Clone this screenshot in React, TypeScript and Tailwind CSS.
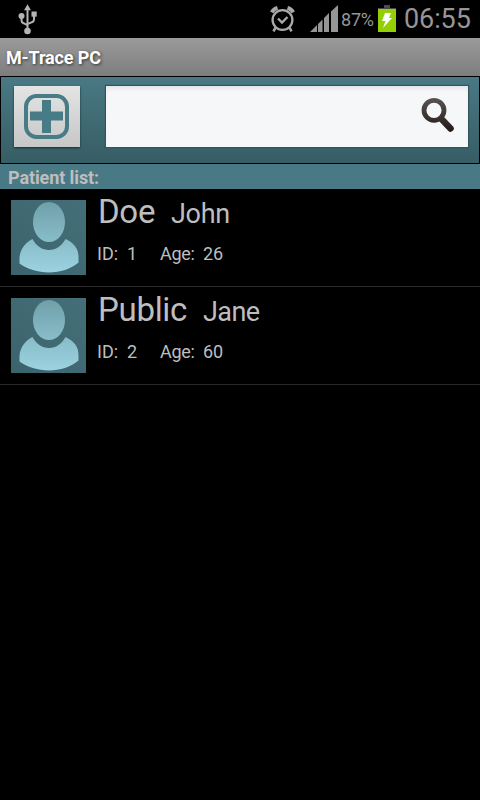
import React from "react";

type Patient = {
  last: string;
  first: string;
  id: number;
  age: number;
  lastStyle: string;
  firstStyle: string;
};

const patients: Patient[] = [
  { last: "Doe", first: "John", id: 1, age: 26, lastStyle: "w-[71px] tracking-[-0.3px]", firstStyle: "tracking-[-0.3px]" },
  { last: "Public", first: "Jane", id: 2, age: 60, lastStyle: "w-[103px] tracking-[-0.3px]", firstStyle: "tracking-[-0.6px]" },
];

function UsbIcon() {
  return (
    <svg width="20" height="31" viewBox="0 0 20 31" fill="none" stroke="#b4b4b4" strokeWidth="2">
      <path d="M9.500 5v21M3.500 12v4.500q0 2 2 2.700l4 2M16 10v5.500q0 2-2 2.700l-4.500 2" />
      <path d="M9.500 .3l3.500 6h-7z" fill="#b4b4b4" stroke="none" />
      <circle cx="3.500" cy="12" r="3" fill="#b4b4b4" stroke="none" />
      <rect x="13.500" y="7.500" width="5.200" height="5.200" fill="#b4b4b4" stroke="none" />
      <circle cx="9.500" cy="27" r="3.300" fill="#b4b4b4" stroke="none" />
    </svg>
  );
}

function AlarmIcon() {
  return (
    <svg width="26" height="28" viewBox="0 0 26 28" fill="none" stroke="#a9a9a9">
      <circle cx="12.500" cy="15" r="9.900" strokeWidth="2.300" />
      <path d="M8 13.500l4 4 5.500-5.500" strokeWidth="2.400" />
      <path d="M1.800 7.300C3 5 5 3.500 7.500 2.800M23.200 7.300C22 5 20 3.500 17.500 2.800" strokeWidth="3.800" />
      <path d="M5.500 22.500l-2 3.800M19.500 22.500l2 3.800" strokeWidth="2.600" />
    </svg>
  );
}

function SignalIcon() {
  return (
    <svg width="28" height="27" viewBox="0 0 28 27" fill="#969696">
      <path d="M0 27l7-7v7zM8 19l4.500-4.500V27H8zM14 13l5-5v19h-5zM21 6.500L28 0v27h-7z" />
    </svg>
  );
}

function BatteryIcon() {
  return (
    <svg width="18" height="27" viewBox="0 0 18 27">
      <path d="M6 0h6v3h6v4H0V3h6z" fill="#4a4a4a" />
      <rect y="4" width="18" height="23" fill="#93cf05" />
      <path d="M7 8h6l-2 5h3L5 23l2.500-7H4z" fill="#fff" />
    </svg>
  );
}

function StatusBar() {
  return (
    <header className="flex h-[38px] items-start bg-black text-[#969696]">
      <div className="ml-[18px] mt-1"><UsbIcon /></div>
      <div className="ml-[232px] mt-[5px]"><AlarmIcon /></div>
      <div className="ml-[14px] mt-[5px]"><SignalIcon /></div>
      <span className="ml-[3px] mt-[9px] w-[37px] text-[18px] leading-[22px] tracking-[-0.2px] whitespace-nowrap">87%</span>
      <div className="mt-[5px]"><BatteryIcon /></div>
      <span className="ml-2 mt-[3px] text-[27px] leading-[32px] tracking-[-0.1px] whitespace-nowrap">06:55</span>
    </header>
  );
}

function Avatar() {
  return (
    <svg width="75" height="75" viewBox="0 0 75 75">
      <defs>
        <linearGradient id="tile" x1="0" y1="1" x2="1" y2="0">
          <stop offset="0" stopColor="#3b636d" />
          <stop offset="1" stopColor="#456f78" />
        </linearGradient>
        <linearGradient id="person" gradientUnits="userSpaceOnUse" x1="0" y1="3" x2="0" y2="72">
          <stop offset="0" stopColor="#70a1ab" />
          <stop offset="1" stopColor="#9cd3e1" />
        </linearGradient>
      </defs>
      <rect width="75" height="75" fill="url(#tile)" />
      <ellipse cx="38" cy="22" rx="16" ry="20" fill="url(#person)" />
      <path d="M21.500 39C26 46.500 31 50 38 50s12-3.500 16.500-11C62 42.500 68 48 67.500 58v4.500C60 69 49 72.500 38 72.500S16 69 8.500 63.500V58C9 49 15 42 21.500 39z" fill="url(#person)" />
    </svg>
  );
}

function PatientRow({ patient }: { patient: Patient }) {
  return (
    <li className="flex h-[98px] border-b border-[#292929] text-[#bebebe]">
      <div className="ml-[11px] mt-[11px] h-[75px] w-[75px]"><Avatar /></div>
      <div className="ml-[11px] whitespace-nowrap">
        <div className="mt-[3px] flex h-[40px] items-baseline pl-px">
          <span className={"text-[33px] leading-[40px] " + patient.lastStyle}>{patient.last}</span>
          <span className={"ml-0.5 text-[27px] leading-[32px] " + patient.firstStyle}>{patient.first}</span>
        </div>
        <div className="mt-[11px] flex text-[18px] leading-[22px]">
          <span className="w-[30px]">ID:</span>
          <span className="w-[33px]">{patient.id}</span>
          <span className="w-[43px] tracking-[-0.3px]">Age:</span>
          <span>{patient.age}</span>
        </div>
      </div>
    </li>
  );
}

export default function App() {
  return (
    <main className="flex h-[800px] w-[480px] flex-col overflow-hidden bg-black font-[Roboto,sans-serif]">
      <StatusBar />
      <div className="h-[38px] bg-linear-to-b from-[#9b9b9b] to-[#7d7d7d] pl-1.5 pt-[9px]">
        <h1 className="text-[18px] font-bold leading-[22px] tracking-[-0.15px] text-white [text-shadow:1px_1px_3px_#333]">M-Trace PC</h1>
      </div>
      <section className="flex h-[88px] border border-black bg-linear-to-b from-[#497984] to-[#375d65] pl-[13px] pt-[9px]">
        <button className="flex h-[61px] w-[66px] items-center bg-linear-to-b from-[#e4e4e4] to-[#c6c7c7] pl-[10px] shadow-[0_1px_2px_#142d33]">
          <svg width="45" height="45" viewBox="0 0 45 45" fill="none" stroke="#477b86">
            <rect x="2" y="2" width="41" height="41" rx="10.500" strokeWidth="4" />
            <path d="M22.500 6v33M6 22h33" strokeWidth="9" />
          </svg>
        </button>
        <div className="ml-[26px] flex h-[61px] w-[362px] justify-end bg-[#f5f7f9] pr-[13px] pt-[11px] shadow-[0_0_1px_1px_#31545d,inset_0_5px_5px_-3px_#dde1e2]">
          <svg width="34" height="37" viewBox="0 0 34 37" fill="none">
            <defs>
              <linearGradient id="glass" gradientUnits="userSpaceOnUse" x1="0" y1="0" x2="0" y2="36">
                <stop offset="0" stopColor="#5a5655" />
                <stop offset="1" stopColor="#211713" />
              </linearGradient>
            </defs>
            <circle cx="13" cy="13.300" r="10" stroke="url(#glass)" strokeWidth="4.800" />
            <path d="M20.500 22l9 9.500" stroke="url(#glass)" strokeWidth="6.500" strokeLinecap="round" />
          </svg>
        </div>
      </section>
      <h2 className="h-[25px] bg-[#497984] pl-2 pt-[3px] text-[18px] font-bold leading-[22px] tracking-[-0.1px] text-[#bebebe]">Patient list:</h2>
      <ul>
        {patients.map((patient) => (
          <PatientRow key={patient.id} patient={patient} />
        ))}
      </ul>
    </main>
  );
}
